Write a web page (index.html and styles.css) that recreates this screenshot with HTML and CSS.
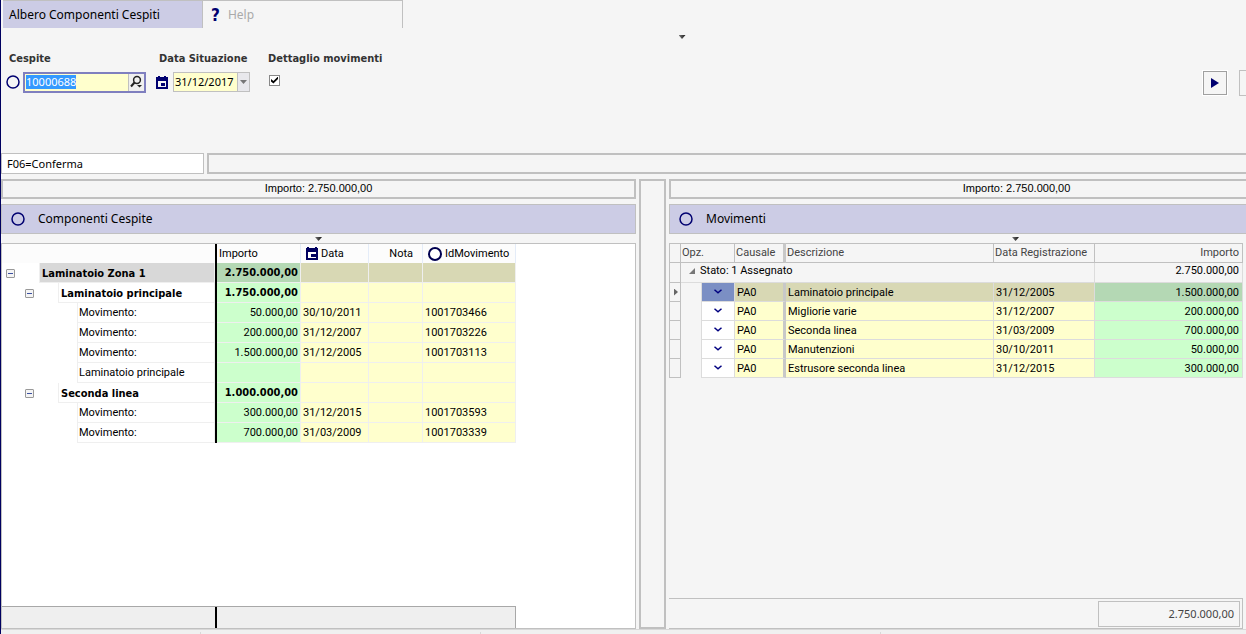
FILE: index.html
```html
<!DOCTYPE html>
<html lang="it">
<head>
<meta charset="utf-8">
<title>Albero Componenti Cespiti</title>
<link rel="stylesheet" href="styles.css">
</head>
<body>
<div class="app">
  <nav class="tabs">
    <button class="tab tab-active" type="button">Albero Componenti Cespiti</button>
    <button class="tab tab-help" type="button"><span class="help-mark">?</span>Help</button>
  </nav>

  <header class="filters">
    <span class="caret caret-top"></span>
    <form class="form">
      <div class="field">
        <label class="label" for="cespite">Cespite</label>
        <div class="control">
          <svg class="ring" viewBox="0 0 14 14"><circle cx="7" cy="7" r="6"/></svg>
          <div class="lookup">
            <input class="lookup-input" id="cespite" type="text" value="10000688">
            <button class="lookup-button" type="button" aria-label="Cerca">
              <svg width="13" height="14" viewBox="0 0 13 14"><circle cx="7" cy="5" r="3.4" fill="none" stroke="#222" stroke-width="1.5"/><path d="M4.5 7.5L1 11.5" stroke="#222" stroke-width="2"/><path d="M7 10h5l-2.500 2.500z" fill="#222"/></svg>
            </button>
          </div>
        </div>
      </div>
      <div class="field">
        <label class="label" for="data">Data Situazione</label>
        <div class="control">
          <svg class="calendar" viewBox="0 0 12 13"><path d="M0 1h12v12H0zM2 0h2v1H2zM8 0h2v1H8z" fill="#000070"/><path d="M2 5h8v6H2z" fill="#f5f5f5"/><path d="M5 7h4v3H5z" fill="#000070"/></svg>
          <div class="date">
            <input class="date-input" id="data" type="text" value="31/12/2017">
            <button class="date-button" type="button" aria-label="Apri calendario"><span class="drop"></span></button>
          </div>
        </div>
      </div>
      <div class="field">
        <label class="label" for="dettaglio">Dettaglio movimenti</label>
        <div class="control control-check"><input class="check" id="dettaglio" type="checkbox" checked></div>
      </div>
    </form>
    <div class="actions">
      <button class="play" type="button" aria-label="Esegui"><svg width="8" height="10" viewBox="0 0 8 10"><path d="M0 0l8 5-8 5z" fill="#000070"/></svg></button>
      <button class="more" type="button" aria-label="Altro"></button>
    </div>
  </header>

  <div class="keys">
    <div class="key">F06=Conferma</div>
    <div class="key-rest"></div>
  </div>

  <main class="panels">
    <section class="panel">
      <div class="sum">Importo: 2.750.000,00</div>
      <h2 class="title"><svg class="ring" viewBox="0 0 14 14"><circle cx="7" cy="7" r="6"/></svg>Componenti Cespite</h2>
      <div class="strip"><span class="caret"></span></div>
      <div class="tree-box">
        <table class="tree">
          <colgroup><col class="c-tree"><col class="c-imp"><col class="c-date"><col class="c-nota"><col class="c-id"></colgroup>
          <thead>
            <tr><th></th><th>Importo</th><th><span class="head"><svg class="calendar" viewBox="0 0 12 13"><path d="M0 1h12v12H0zM1 0h2v1H1zM9 0h2v1H9z" fill="#000060"/><path d="M2 5h8v6H2z" fill="#fff"/><path d="M5 7h5v3H5z" fill="#000060"/></svg>Data</span></th><th class="right">Nota</th><th><span class="head"><svg class="ring ring-bold" viewBox="0 0 14 14"><circle cx="7" cy="7" r="6"/></svg>IdMovimento</span></th></tr>
          </thead>
          <tbody>
            <tr class="strong selected"><td><div class="node l1"><button class="toggle" type="button" aria-label="Comprimi"></button><span class="name">Laminatoio Zona 1</span></div></td><td>2.750.000,00</td><td></td><td></td><td></td></tr>
            <tr class="strong"><td><div class="node l2"><button class="toggle" type="button" aria-label="Comprimi"></button><span class="name">Laminatoio principale</span></div></td><td>1.750.000,00</td><td></td><td></td><td></td></tr>
            <tr><td><div class="node l3"><span class="name">Movimento:</span></div></td><td>50.000,00</td><td>30/10/2011</td><td></td><td>1001703466</td></tr>
            <tr><td><div class="node l3"><span class="name">Movimento:</span></div></td><td>200.000,00</td><td>31/12/2007</td><td></td><td>1001703226</td></tr>
            <tr><td><div class="node l3"><span class="name">Movimento:</span></div></td><td>1.500.000,00</td><td>31/12/2005</td><td></td><td>1001703113</td></tr>
            <tr><td><div class="node l3"><span class="name">Laminatoio principale</span></div></td><td></td><td></td><td></td><td></td></tr>
            <tr class="strong"><td><div class="node l2"><button class="toggle" type="button" aria-label="Comprimi"></button><span class="name">Seconda linea</span></div></td><td>1.000.000,00</td><td></td><td></td><td></td></tr>
            <tr><td><div class="node l3"><span class="name">Movimento:</span></div></td><td>300.000,00</td><td>31/12/2015</td><td></td><td>1001703593</td></tr>
            <tr><td><div class="node l3"><span class="name">Movimento:</span></div></td><td>700.000,00</td><td>31/03/2009</td><td></td><td>1001703339</td></tr>
          </tbody>
        </table>
        <div class="tree-foot"><div class="foot-a"></div><div class="foot-b"></div></div>
      </div>
    </section>

    <div class="splitter"></div>

    <section class="panel panel-wide">
      <div class="sum">Importo: 2.750.000,00</div>
      <h2 class="title"><svg class="ring" viewBox="0 0 14 14"><circle cx="7" cy="7" r="6"/></svg>Movimenti</h2>
      <div class="strip"><span class="caret"></span></div>
      <div class="moves-box">
        <table class="moves">
          <colgroup><col class="m-mark"><col class="m-gap"><col class="m-opz"><col class="m-caus"><col class="m-desc"><col class="m-date"><col class="m-imp"></colgroup>
          <thead>
            <tr><th class="mark"></th><th colspan="2">Opz.</th><th class="thick">Causale</th><th>Descrizione</th><th>Data Registrazione</th><th class="right">Importo</th></tr>
          </thead>
          <tbody>
            <tr class="group"><td class="mark"></td><td colspan="5"><span class="group-name"><svg width="6" height="6" viewBox="0 0 6 6"><path d="M6 0v6H0z" fill="#777"/></svg>Stato: 1 Assegnato</span></td><td class="right">2.750.000,00</td></tr>
            <tr class="selected"><td class="mark"><span class="pointer"></span></td><td class="gap"></td><td class="opz"><button class="option" type="button" aria-label="Opzioni"><svg width="8" height="5" viewBox="0 0 8 5"><path d="M.5.8L4 3.800L7.500.8"/></svg></button></td><td class="thick">PA0</td><td>Laminatoio principale</td><td>31/12/2005</td><td class="amount">1.500.000,00</td></tr>
            <tr><td class="mark"></td><td class="gap"></td><td class="opz"><button class="option" type="button" aria-label="Opzioni"><svg width="8" height="5" viewBox="0 0 8 5"><path d="M.5.8L4 3.800L7.500.8"/></svg></button></td><td class="thick">PA0</td><td>Migliorie varie</td><td>31/12/2007</td><td class="amount">200.000,00</td></tr>
            <tr><td class="mark"></td><td class="gap"></td><td class="opz"><button class="option" type="button" aria-label="Opzioni"><svg width="8" height="5" viewBox="0 0 8 5"><path d="M.5.8L4 3.800L7.500.8"/></svg></button></td><td class="thick">PA0</td><td>Seconda linea</td><td>31/03/2009</td><td class="amount">700.000,00</td></tr>
            <tr><td class="mark"></td><td class="gap"></td><td class="opz"><button class="option" type="button" aria-label="Opzioni"><svg width="8" height="5" viewBox="0 0 8 5"><path d="M.5.8L4 3.800L7.500.8"/></svg></button></td><td class="thick">PA0</td><td>Manutenzioni</td><td>30/10/2011</td><td class="amount">50.000,00</td></tr>
            <tr><td class="mark"></td><td class="gap"></td><td class="opz"><button class="option" type="button" aria-label="Opzioni"><svg width="8" height="5" viewBox="0 0 8 5"><path d="M.5.8L4 3.800L7.500.8"/></svg></button></td><td class="thick">PA0</td><td>Estrusore seconda linea</td><td>31/12/2015</td><td class="amount">300.000,00</td></tr>
          </tbody>
        </table>
        <div class="moves-foot"><output class="total">2.750.000,00</output></div>
      </div>
    </section>
  </main>
  <footer class="status"><span class="cell"></span><span class="cell cell-2"></span><span class="cell cell-3"></span></footer>
</div>
<script src="app.js"></script>
</body>
</html>
```

FILE: styles.css
```css
* { box-sizing: border-box; }
body { margin: 0; background: #f5f5f5; color: #000; font: 11px/14px "Noto Sans", "Open Sans", sans-serif; }
button, input { font: inherit; color: inherit; border: 0; padding: 0; margin: 0; background: none; border-radius: 0; outline: 0; }
svg { display: block; flex: none; }
.app { min-height: 100vh; display: flex; flex-direction: column; border-left: 1px solid #000060; overflow: hidden; }

.tabs { display: flex; height: 28px; padding-left: 2px; font-size: 12px; }
.tab { width: 200px; border: solid #c0c0c0; border-width: 1px 1px 0 0; text-align: left; padding-left: 6px; }
.tab-active { background: #cccce5; }
.tab-help { display: flex; align-items: center; gap: 8px; padding-left: 8px; color: #aaa; }
.help-mark { color: #000070; font: bold 17px "DejaVu Sans Condensed", sans-serif; }

.filters { position: relative; display: flex; justify-content: space-between; height: 125px; padding-top: 23px; }
.caret { width: 7px; height: 4px; background: linear-gradient(90deg, #777, #111); clip-path: polygon(0 0, 100% 0, 50% 100%); }
.caret-top { position: absolute; top: 7px; left: calc(50% + 55px); }
.form { display: flex; }
.field { display: flex; flex-direction: column; gap: 6px; padding-left: 8px; }
.label { height: 14px; font: bold 11px/15px "DejaVu Sans Condensed", sans-serif; color: #333; white-space: nowrap; }
.control { display: flex; align-items: center; height: 22px; gap: 3px; margin-left: -3px; }
.field + .field { padding-left: 13px; }
.field:last-child { padding-left: 18px; }
.ring { width: 14px; height: 14px; }
.ring circle { fill: none; stroke: #000070; stroke-width: 1.5; }
.ring-bold circle { fill: #fff; stroke: #000050; stroke-width: 2; }
.calendar { width: 12px; height: 13px; }
.lookup { display: flex; width: 123px; height: 21px; border: 2px solid #7f7fbf; background: #ffffcd; }
.lookup-input { flex: 1; min-width: 0; padding-left: 1px; }
.lookup-input::selection { background: #3399ff; color: #fff; }
.lookup-button { width: 16px; display: grid; place-items: center; border-left: 1px solid #c0c0c0; background: #efefef; }
.calendar + .date { margin-left: 2px; }
.date { display: flex; width: 77px; height: 20px; border: 1px solid #c0c0c0; background: #ffffcd; }
.date-input { flex: 1; min-width: 0; padding-left: 1px; }
.date-button { width: 12px; display: grid; place-items: center; border-left: 1px solid #c0c0c0; background: #e8e8ec; }
.drop { width: 7px; height: 4px; background: #777; clip-path: polygon(0 0, 100% 0, 50% 100%); }
.control-check { height: 18px; margin-left: 1px; }
.check { appearance: none; width: 11px; height: 11px; border: 1px solid #888; background: #fff; display: grid; place-items: center; }
.check:checked::after { content: ""; width: 7px; height: 7px; background: #000; clip-path: polygon(0 35%, 35% 65%, 100% 0, 100% 35%, 35% 100%, 0 70%); }
.actions { display: flex; align-items: center; height: 26px; margin-top: 19px; gap: 12px; }
.play { width: 24px; height: 24px; display: grid; place-items: center; border: 1px solid #a0a0a0; outline: 1px solid #fff; }
.more { width: 7px; height: 26px; border: solid #c0c0c0; border-width: 1px 0 1px 1px; }

.keys { display: flex; gap: 3px; height: 21px; margin-bottom: 5px; }
.key { width: 203px; padding: 3px 5px; border: 1px solid #c0c0c0; background: #fff; }
.key-rest { flex: 1; border: solid #c0c0c0; border-width: 2px 0 2px 2px; }

.panels { flex: 1; display: grid; grid-template-columns: 635fr 27px 577fr; column-gap: 3px; }
.panel { display: flex; flex-direction: column; min-width: 0; }
.sum { height: 20px; border: 2px solid #c0c0c0; text-align: center; font: 11px/15px "Liberation Sans", sans-serif; }
.title { display: flex; align-items: center; gap: 13px; height: 30px; margin: 5px 0 0; padding-left: 9px; border: 1px solid #c0c0c0; background: #cccce5; font-size: 12px; font-weight: normal; }
.strip { display: flex; justify-content: center; height: 9px; padding-top: 3px; }
.panel-wide .sum, .panel-wide .strip { padding-left: 116px; }
.panel-wide .sum, .panel-wide .title { border-right: 0; }
.splitter { border: 2px solid #c0c0c0; }

.tree-box { flex: 1; display: flex; flex-direction: column; justify-content: space-between; align-items: flex-start; border: 1px solid #c0c0c0; background: #fff; }
table { table-layout: fixed; border-collapse: separate; border-spacing: 0; font: 11px/14px Roboto, sans-serif; }
th, td { padding: 0 2px; font-weight: normal; text-align: left; white-space: nowrap; overflow: hidden; }
th.right, td.right { text-align: right; }
.tree { width: 514px; }
.c-tree { width: 215px; }
.c-imp { width: 84px; }
.c-date { width: 68px; }
.c-nota { width: 54px; }
.c-id { width: 93px; }
.tree th { height: 19px; background: #fcfcfc; border-right: 1px solid #e4ecf8; }
.tree th.right { padding-right: 9px; }
.tree td { height: 20px; border: solid #efefef; border-width: 0 1px 1px 0; background: #ffffcd; padding-top: 1px; }
.tree tr > :first-child { padding: 0; border-right: 2px solid #000; }
.tree td:first-child { background: #fff; border-bottom: 0; }
.tree td:nth-child(2) { text-align: right; background: #ccffcc; }
.tree .selected td { background: #d8d8b4; }
.tree .selected td:first-child { background: #fff; }
.tree .selected td:nth-child(2) { background: #b4d8b4; }
.strong { font: bold 11px/14px "DejaVu Sans Condensed", sans-serif; }
.strong td { font-weight: bold; }
.head { display: flex; align-items: center; gap: 3px; padding-left: 3px; }
.node { display: flex; align-items: center; height: 20px; }
.l1 { padding-left: 4px; gap: 24px; }
.l2 { padding-left: 23px; gap: 24px; }
.l3 { padding-left: 75px; }
.name { flex: 1; height: 20px; padding: 3px 1px; border: solid #efefef; border-width: 0 1px 1px 1px; }
.strong .name { padding: 4px 2px 0; }
.selected .name { background: #d8d8d8; }
.toggle { width: 9px; height: 9px; border: 1px solid #999; border-radius: 1px; background: linear-gradient(#3c50a0, #3c50a0) center / 5px 1px no-repeat #f4f4f4; }
.tree-foot { display: flex; width: 514px; height: 22px; border: solid #a8a8a8; border-width: 1px 1px 0 0; background: #efefef; }
.foot-a { width: 215px; border-right: 2px solid #000; }

.moves-box { flex: 1; display: flex; flex-direction: column; justify-content: space-between; margin-right: 3px; border-bottom: 1px solid #c0c0c0; }
.moves { width: 100%; }
.m-mark { width: 12px; }
.m-gap { width: 21px; }
.m-opz { width: 33px; }
.m-caus { width: 51px; }
.m-date { width: 101px; }
.m-imp { width: 148px; }
.moves th { height: 20px; border: solid #c0c0c0; border-width: 1px 1px 1px 0; color: #444; padding-right: 3px; padding-left: 1px; }
.moves td { height: 19px; border: solid #dcdcdc; border-width: 0 1px 1px 0; background: #ffffcd; padding: 2px 3px 0 2px; }
.moves .mark { padding: 0; border-left: 1px solid #c0c0c0; border-right-color: #c0c0c0; }
.moves td.mark { background: #f5f5f5; border-bottom-color: #c0c0c0; }
.moves .thick { border-right: 3px solid #c8c8c8; }
.moves .group td { height: 20px; background: #f5f5f5; vertical-align: top; padding-top: 1px; }
.group-name { display: flex; align-items: center; gap: 5px; padding-left: 6px; }
.moves .gap { background: #f5f5f5; border-bottom: 0; }
.moves .opz { padding: 0; background: #fff; }
.option { display: grid; place-items: center; width: 100%; height: 18px; padding-bottom: 2px; }
.option path { fill: none; stroke: #000080; stroke-width: 1.5; }
.moves .amount { text-align: right; background: #ccffcc; }
.moves .selected td { background: #d8d8b4; }
.moves .selected .opz { background: #7b8fc4; }
.moves .selected .gap, .moves .selected .mark { background: #f5f5f5; }
.moves .selected .amount { background: #b4d8b4; }
.pointer { display: block; margin-left: 4px; width: 4px; height: 7px; background: #666; clip-path: polygon(0 0, 100% 50%, 0 100%); }
.moves-foot { display: flex; justify-content: flex-end; height: 30px; padding: 2px; border: solid #c0c0c0; border-width: 1px 1px 0 0; }
.total { width: 142px; height: 26px; padding: 5px; border: 1px solid #c0c0c0; color: #444; text-align: right; }

.status { display: flex; height: 5px; background: #f0f0f0; border-top: 1px solid #d8d8d8; }
.cell { width: 200px; margin-top: 2px; border-right: 1px solid #d8d8d8; }
.cell-2 { width: 280px; }
.cell-3 { width: 400px; }
```

FILE: app.js
```js
const field = document.getElementById("cespite");
field.focus();
field.select();
```
